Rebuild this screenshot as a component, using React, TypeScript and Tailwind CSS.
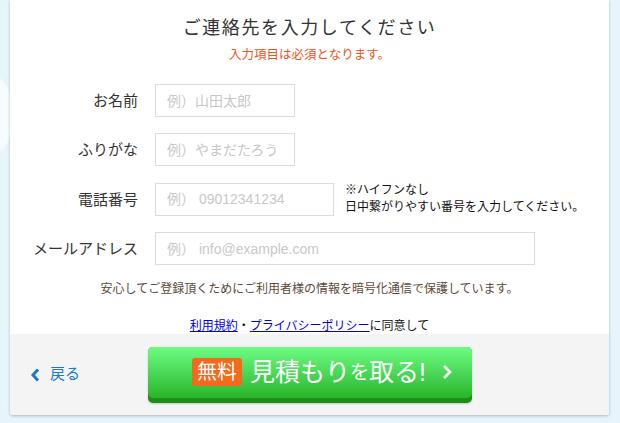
import React from "react";

const jp = { fontFamily: '"Liberation Sans", "Noto Sans CJK JP", "Noto Sans", sans-serif' };

function Row({ label, placeholder, width, children }: { label: string; placeholder: string; width: string; children?: React.ReactNode }) {
  return (
    <div className="flex items-center">
      <div className="w-[128px] text-right text-[15px] text-[#333] leading-none">{label}</div>
      <input
        readOnly
        placeholder={placeholder}
        className={`ml-[17px] h-[33px] ${width} border border-[#dcdcdc] bg-white pl-[11px] text-[14px] outline-none placeholder:text-[#c8c8c8]`}
        style={jp}
      />
      {children}
    </div>
  );
}

export default function App() {
  return (
    <div className="relative w-[620px] h-[423px] overflow-hidden bg-[#e7f4fc]" style={jp}>
      <div className="absolute left-[-38px] top-[74px] w-[48px] h-[82px] rounded-full bg-[#f6fbfe]" />
      <div className="relative ml-[10px] w-[599px] h-[415px] bg-white rounded-b-[3px] shadow-[0_1px_3px_rgba(0,0,0,0.25)] flex flex-col overflow-hidden">
        <div className="flex-1 flex flex-col">
          <div className="pt-[16px] text-center text-[18px] leading-[24px] tracking-[1.6px] text-[#333]">ご連絡先を入力してください</div>
          <div className="mt-[7px] text-center text-[12.5px] leading-[16px] text-[#f0541e]">入力項目は必須となります。</div>
          <div className="mt-[21px] flex flex-col gap-[16px]">
            <Row label="お名前" placeholder="例）山田太郎" width="w-[140px]" />
            <Row label="ふりがな" placeholder="例）やまだたろう" width="w-[140px]" />
            <Row label="電話番号" placeholder="例） 09012341234" width="w-[179px]">
              <div className="ml-[11px] text-[12px] leading-[17px] text-[#111]">
                <div>※ハイフンなし</div>
                <div>日中繋がりやすい番号を入力してください。</div>
              </div>
            </Row>
            <Row label="メールアドレス" placeholder="例） info@example.com" width="w-[380px]" />
          </div>
          <div className="mt-[16px] text-center text-[12px] leading-[16px] text-[#5c4a3a]">安心してご登録頂くためにご利用者様の情報を暗号化通信で保護しています。</div>
          <div className="mt-[21px] text-center text-[12px] leading-[16px] text-[#111]">
            <span className="text-[#0000ee] underline">利用規約</span>
            <span>・</span>
            <span className="text-[#0000ee] underline">プライバシーポリシー</span>
            <span>に同意して</span>
          </div>
        </div>
        <div className="h-[81px] bg-[#f4f4f4] flex items-center">
          <div className="ml-[20px] flex items-center gap-[10px] text-[#1a78d0] text-[15px]">
            <svg width="10" height="14" viewBox="0 0 10 14"><path d="M8 1.5 L3 7 L8 12.5" fill="none" stroke="#1a78d0" strokeWidth="3" /></svg>
            <span>戻る</span>
          </div>
          <div className="ml-[68px] w-[324px] h-[56px] rounded-[5px] bg-[#1f8d1a] pb-[5px] shadow-[0_1px_2px_rgba(0,0,0,0.2)]">
            <div className="h-full rounded-[5px] bg-gradient-to-b from-[#6cfd83] to-[#28b526] flex items-center pl-[44px]">
              <span className="h-[28px] px-[5px] rounded-[3px] bg-[#f26a1b] text-white text-[20px] leading-[28px]">無料</span>
              <span className="ml-[8px] text-white text-[25px] leading-none">見積もり</span>
              <span className="text-white text-[19px] leading-none">を</span>
              <span className="text-white text-[25px] leading-none">取る!</span>
              <svg className="ml-[16px]" width="10" height="16" viewBox="0 0 10 16"><path d="M2 2 L8 8 L2 14" fill="none" stroke="white" strokeWidth="2.6" /></svg>
            </div>
          </div>
        </div>
      </div>
    </div>
  );
}
